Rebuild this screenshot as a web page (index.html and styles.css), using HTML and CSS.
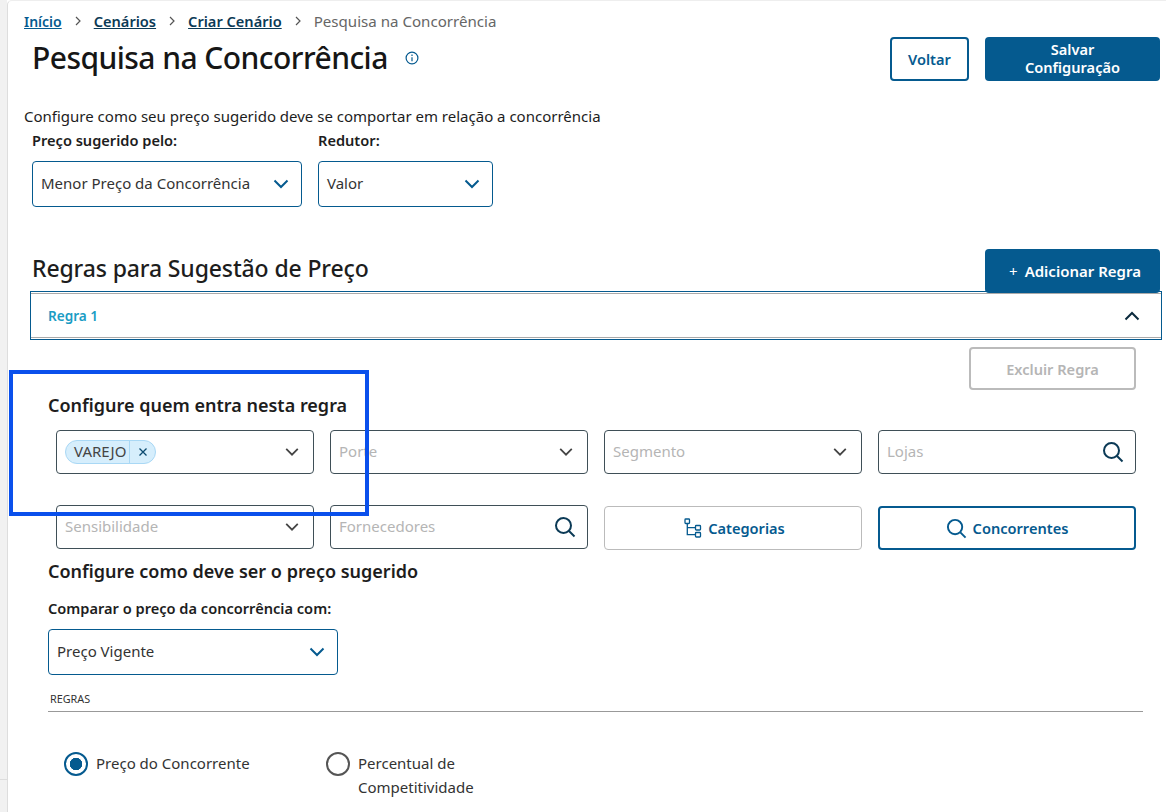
FILE: index.html
```html
<!DOCTYPE html>
<html lang="pt-BR">
<head>
<meta charset="utf-8">
<title>Pesquisa na Concorrência</title>
<link rel="stylesheet" href="styles.css">
</head>
<body>
<div class="rail"><div class="rail-line"></div></div>
<div class="page">
  <nav class="crumbs">
    <a class="crumb first">Início</a><svg class="sep" viewBox="0 0 8 12"><path d="M2 2l4 4-4 4"/></svg>
    <a class="crumb">Cenários</a><svg class="sep" viewBox="0 0 8 12"><path d="M2 2l4 4-4 4"/></svg>
    <a class="crumb">Criar Cenário</a><svg class="sep" viewBox="0 0 8 12"><path d="M2 2l4 4-4 4"/></svg>
    <span class="crumb-current">Pesquisa na Concorrência</span>
  </nav>
  <header class="head">
    <h1>Pesquisa na Concorrência</h1>
    <svg class="info" viewBox="0 0 14 14"><circle cx="7" cy="7" r="5.9"/><path d="M7 6.2v4M7 3.6v1.3"/></svg>
    <div class="head-actions">
      <button class="btn btn-outline btn-voltar">Voltar</button>
      <button class="btn btn-primary btn-salvar">Salvar Configuração</button>
    </div>
  </header>
  <p class="desc">Configure como seu preço sugerido deve se comportar em relação a concorrência</p>
  <div class="top-fields">
    <div class="f-menor">
      <div class="label">Preço sugerido pelo:</div>
      <div class="select tall"><span>Menor Preço da Concorrência</span><svg class="chev" viewBox="0 0 18 18"><path d="M2.5 5.5L9 12l6.5-6.5"/></svg></div>
    </div>
    <div class="f-redutor">
      <div class="label">Redutor:</div>
      <div class="select tall"><span>Valor</span><svg class="chev" viewBox="0 0 18 18"><path d="M2.5 5.5L9 12l6.5-6.5"/></svg></div>
    </div>
  </div>
  <div class="rules-head">
    <h2>Regras para Sugestão de Preço</h2>
    <button class="btn btn-primary btn-add"><span class="plus">+</span>Adicionar Regra</button>
  </div>
  <div class="accordion">
    <div class="accordion-inner">
      <span class="acc-title">Regra 1</span>
      <svg class="chev-up" viewBox="0 0 18 18"><path d="M2.5 12.5L9 6l6.5 6.5"/></svg>
    </div>
  </div>
  <div class="delete-row"><button class="btn btn-disabled">Excluir Regra</button></div>
  <h3 class="who">Configure quem entra nesta regra</h3>
  <div class="grid">
    <div class="field"><span class="chip"><span class="chip-text">VAREJO</span><span class="chip-x"><svg viewBox="0 0 10 10"><path d="M1.5 1.5l7 7M8.5 1.5l-7 7"/></svg></span></span><svg class="chev small" viewBox="0 0 18 18"><path d="M2.5 5.5L9 12l6.5-6.5"/></svg></div>
    <div class="field"><span class="ph">Porte</span><svg class="chev small" viewBox="0 0 18 18"><path d="M2.5 5.5L9 12l6.5-6.5"/></svg></div>
    <div class="field"><span class="ph">Segmento</span><svg class="chev small" viewBox="0 0 18 18"><path d="M2.5 5.5L9 12l6.5-6.5"/></svg></div>
    <div class="field"><span class="ph">Lojas</span><svg class="search" viewBox="0 0 22 22"><circle cx="9.5" cy="9.5" r="7.5"/><path d="M15 15l5.5 5.5"/></svg></div>
    <div class="field"><span class="ph">Sensibilidade</span><svg class="chev small" viewBox="0 0 18 18"><path d="M2.5 5.5L9 12l6.5-6.5"/></svg></div>
    <div class="field"><span class="ph">Fornecedores</span><svg class="search" viewBox="0 0 22 22"><circle cx="9.5" cy="9.5" r="7.5"/><path d="M15 15l5.5 5.5"/></svg></div>
    <button class="btn grid-btn btn-soft"><svg class="tree" viewBox="0 0 18 20"><rect x="1" y="1" width="4.5" height="4.5" rx=".8"/><rect x="11.5" y="7.5" width="5" height="4.5" rx=".8"/><rect x="11.5" y="14.5" width="5" height="4.5" rx=".8"/><path d="M3.3 5.5V16.7h8.2M3.3 9.7h8.2"/></svg>Categorias</button>
    <button class="btn grid-btn btn-outline"><svg class="search blue" viewBox="0 0 22 22"><circle cx="9.5" cy="9.5" r="7.5"/><path d="M15 15l5.5 5.5"/></svg>Concorrentes</button>
  </div>
  <h3 class="how">Configure como deve ser o preço sugerido</h3>
  <div class="label compare">Comparar o preço da concorrência com:</div>
  <div class="select tall compare-select"><span>Preço Vigente</span><svg class="chev" viewBox="0 0 18 18"><path d="M2.5 5.5L9 12l6.5-6.5"/></svg></div>
  <div class="section-line">REGRAS</div>
  <div class="radios">
    <div class="radio-item r1"><span class="radio on"></span><span class="radio-text">Preço do Concorrente</span></div>
    <div class="radio-item r2"><span class="radio"></span><span class="radio-text">Percentual de Competitividade</span></div>
  </div>
</div>
<div class="highlight"></div>
</body>
</html>
```

FILE: styles.css
```css
* { box-sizing: border-box; }
html, body { margin: 0; height: 812px; overflow: hidden; background: #fff; }
body { font-family: "Noto Sans", "Open Sans", sans-serif; color: #1d1d1d; position: relative; }
.rail { position: absolute; left: 0; top: 0; width: 7px; height: 812px; background: #f1f1f1; }
.rail-line { position: absolute; left: 0; top: 779px; width: 7px; height: 1px; background: #ddd; }
.page { margin-left: 7px; height: 812px; border-left: 1px solid #ddd; border-top: 1px solid #eee; border-top-left-radius: 5px; padding-left: 24px; position: relative; }
.crumbs { display: flex; align-items: center; height: 20px; margin: 10px 0 0 -8px; font-size: 14.6px; }
.crumb { color: #0b3a56; font-weight: 600; text-decoration: underline; }
.crumb.first { color: #055a8f; font-size: 14px; }
.crumb-current { color: #666; font-size: 15.1px; }
.sep { width: 8px; height: 12px; margin: 0 12px; fill: none; stroke: #555; stroke-width: 1.2; }
.head { display: flex; align-items: center; height: 48px; margin-top: 4px; }
h1 { margin: 0 0 4px; font-size: 30px; font-weight: 500; color: #161616; letter-spacing: -.55px; }
.info { width: 14px; height: 14px; margin: 0 0 2px 17px; fill: none; stroke: #055a8f; stroke-width: 1.2; }
.head-actions { margin-left: auto; display: flex; gap: 16px; margin-right: 6px; }
.btn { font-family: inherit; font-weight: 600; font-size: 14.6px; border-radius: 4px; background: #fff; display: flex; align-items: center; justify-content: center; padding: 0; line-height: 18px; }
.btn-primary { background: #055a8f; color: #fff; border: 0; }
.btn-outline { border: 2px solid #055a8f; color: #055a8f; }
.btn-voltar { width: 79px; height: 44px; }
.btn-salvar { width: 175px; height: 44px; padding: 0 28px 2px; }
.desc { margin: 23px 0 0 -8px; font-size: 15px; line-height: 20px; color: #1d1d1d; }
.top-fields { display: flex; gap: 16px; margin-top: 4px; }
.label { font-size: 14.6px; font-weight: 600; line-height: 20px; color: #1d1d1d; }
.f-menor { width: 270px; }
.f-redutor { width: 175px; }
.select { border: 1px solid #055a8f; border-radius: 4px; display: flex; align-items: center; justify-content: space-between; font-size: 15px; color: #333; background: #fff; }
.select span { margin-bottom: 2px; }
.select.tall { height: 46px; padding: 0 11px 0 8px; margin-top: 11px; }
.chev { width: 18px; height: 18px; fill: none; stroke: #055a8f; stroke-width: 2; }
.rules-head { display: flex; align-items: center; justify-content: space-between; height: 44px; margin: 42px 6px 0 0; }
h2 { margin: 0 0 6px; font-size: 23px; font-weight: 500; color: #1d1d1d; letter-spacing: -.13px; }
.btn-add { width: 175px; height: 44px; position: relative; z-index: 1; font-size: 15px; padding-left: 5px; }
.plus { font-weight: 400; font-size: 15px; margin-right: 7px; }
.accordion { margin: -2px 4px 0 -2px; height: 49px; border: 1px solid #055a8f; padding: 1px 0; }
.accordion-inner { height: 45px; border-top: 1px solid #aaa; border-bottom: 1px solid #aaa; display: flex; align-items: center; justify-content: space-between; padding: 0 20px 0 17px; }
.acc-title { color: #1a9cc4; font-size: 13.6px; font-weight: 600; }
.chev-up { width: 18px; height: 18px; fill: none; stroke: #0b2a3d; stroke-width: 2; }
.delete-row { display: flex; justify-content: flex-end; margin: 7px 30px 0 0; }
.btn-disabled { width: 167px; height: 43px; border: 2px solid #bbb; color: #b5b5b5; }
h3 { margin: 0; font-size: 18px; font-weight: 600; line-height: 24px; color: #1d1d1d; }
.who { margin: 3px 0 0 16px; }
.grid { display: grid; grid-template-columns: repeat(4, 258px); column-gap: 16px; row-gap: 31px; margin: 13px 0 0 24px; }
.field { height: 44px; border: 1px solid #3f4f57; border-radius: 4px; display: flex; align-items: center; justify-content: space-between; padding: 0 13px 0 8px; font-size: 15px; }
.ph { color: #b5b5b5; margin-bottom: 2px; }
.chev.small { width: 16px; height: 16px; stroke: #444; }
.search { width: 22px; height: 22px; fill: none; stroke: #0b3a56; stroke-width: 2; margin-right: -2px; }
.search.blue { stroke: #055a8f; margin: 0 6px 0 0; width: 21px; height: 21px; }
.chip { display: flex; align-items: center; height: 24px; background: #d6eefc; border: 1px solid #a9d8f5; border-radius: 12px; font-size: 15px; color: #444; }
.chip-text { padding: 0 3px 2px 8px; line-height: 20px; height: 22px; border-right: 1px solid #a9d8f5; }
.chip-x { width: 25px; display: flex; justify-content: center; }
.chip-x svg { width: 10px; height: 10px; fill: none; stroke: #0b4a70; stroke-width: 1.3; }
.grid-btn { height: 44px; margin-top: 1px; }
.btn-soft { border: 1px solid #bbb; color: #055a8f; padding-left: 3px; }
.tree { width: 18px; height: 20px; margin-right: 6px; fill: none; stroke: #055a8f; stroke-width: 1.3; }
.how { margin: 9px 0 0 16px; }
.compare { margin: 15px 0 0 16px; }
.compare-select { width: 290px; margin-left: 16px; }
.compare-select.tall { margin-top: 11px; }
.section-line { margin: 17px 23px 0 16px; height: 20px; border-bottom: 1px solid #999; font-size: 10.8px; line-height: 14px; color: #333; padding-left: 2px; }
.radios { display: flex; margin: 40px 0 0 32px; }
.radio-item { display: flex; gap: 8px; font-size: 15px; line-height: 24px; color: #333; }
.radio-text { margin-top: -1px; }
.r1 { width: 262px; }
.r2 { width: 160px; }
.radio { flex: none; width: 24px; height: 24px; border: 2px solid #555; border-radius: 50%; background: #fff; }
.radio.on { border-color: #055a8f; background: radial-gradient(circle, #055a8f 0 6px, #fff 6.5px); }
.highlight { position: absolute; left: 9px; top: 370px; width: 360px; height: 146px; border: 4px solid #0a50ec; pointer-events: none; }
```
